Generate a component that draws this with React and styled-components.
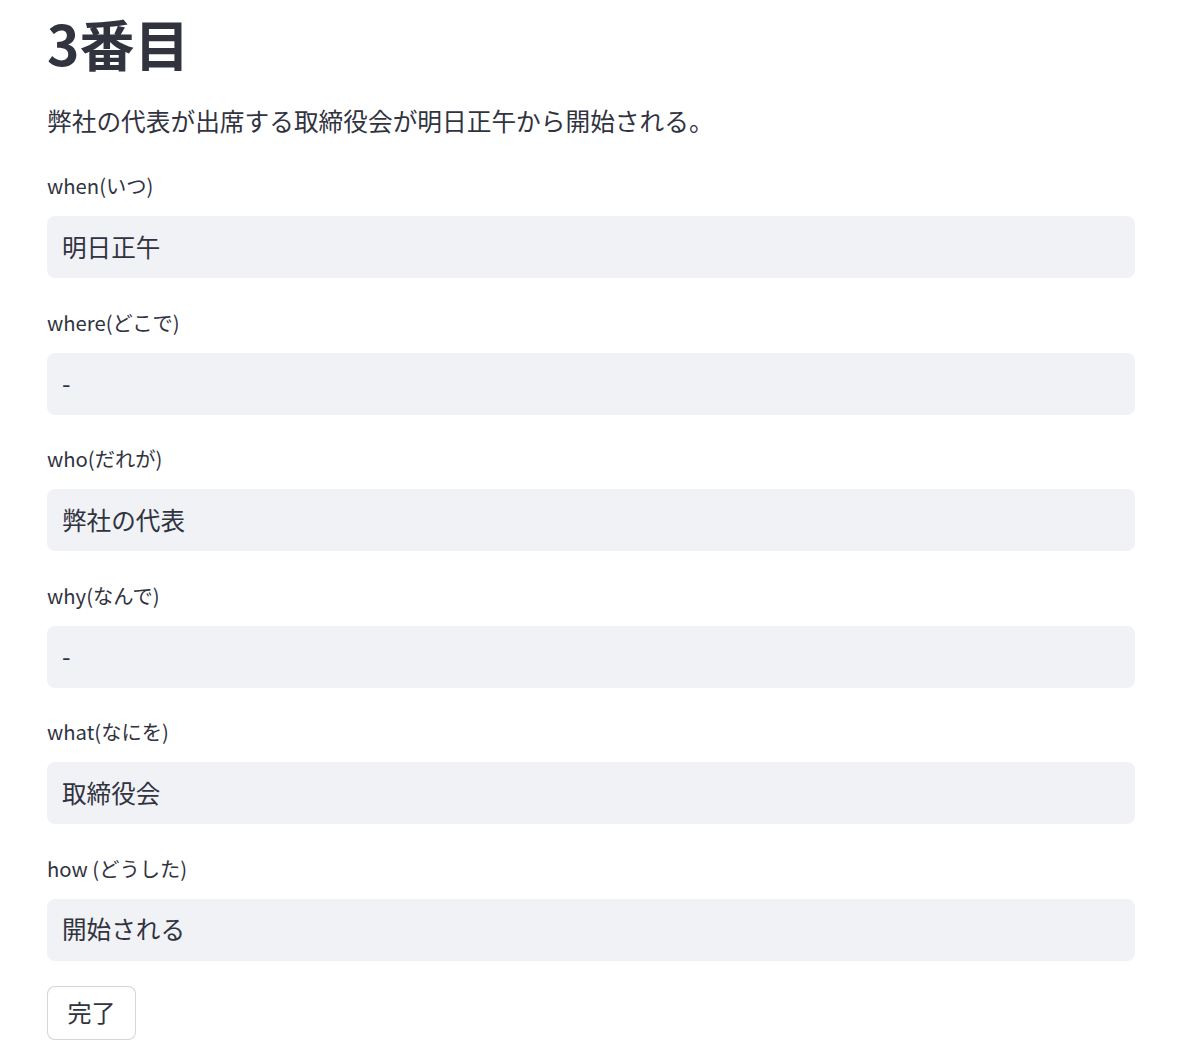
import React from 'react';
import styled, { createGlobalStyle } from 'styled-components';

const GlobalStyle = createGlobalStyle`
  body {
    margin: 0;
    background: #fff;
    color: #31333f;
    font-family: "Noto Sans CJK JP", "Noto Sans", sans-serif;
  }
`;

const Page = styled.main`
  width: 1088px;
  padding: 7px 65px 0 47px;
`;

const Title = styled.h1`
  margin: 0;
  font-size: 55px;
  font-weight: 700;
  line-height: 70px;
`;

const Lead = styled.p`
  margin: 25px 0 32px;
  font-size: 24.7px;
  line-height: 36px;
`;

const Field = styled.div`
  display: flex;
  flex-direction: column;
  margin-bottom: 28.5px;
  &:last-of-type {
    margin-bottom: 25px;
  }
`;

const Label = styled.label`
  font-size: 20.3px;
  line-height: 30px;
  margin-bottom: 16px;
`;

const Box = styled.div`
  height: 62px;
  box-sizing: border-box;
  padding: 0 15px 3px;
  display: flex;
  align-items: center;
  background: #f0f2f6;
  border-radius: 8px;
  font-size: 24.6px;
`;

const Button = styled.button`
  width: 89px;
  height: 54px;
  padding-bottom: 3px;
  background: #fff;
  border: 1px solid rgba(49, 51, 63, 0.2);
  border-radius: 8px;
  color: #31333f;
  font-family: inherit;
  font-size: 24px;
  cursor: pointer;
`;

const fields = [
  { label: 'when(いつ)', value: '明日正午' },
  { label: 'where(どこで)', value: '-' },
  { label: 'who(だれが)', value: '弊社の代表' },
  { label: 'why(なんで)', value: '-' },
  { label: 'what(なにを)', value: '取締役会' },
  { label: 'how (どうした)', value: '開始される' },
];

export default function App() {
  return (
    <Page>
      <GlobalStyle />
      <Title>3番目</Title>
      <Lead>弊社の代表が出席する取締役会が明日正午から開始される。</Lead>
      {fields.map(f => (
        <Field key={f.label}>
          <Label>{f.label}</Label>
          <Box>{f.value}</Box>
        </Field>
      ))}
      <Button>完了</Button>
    </Page>
  );
}
